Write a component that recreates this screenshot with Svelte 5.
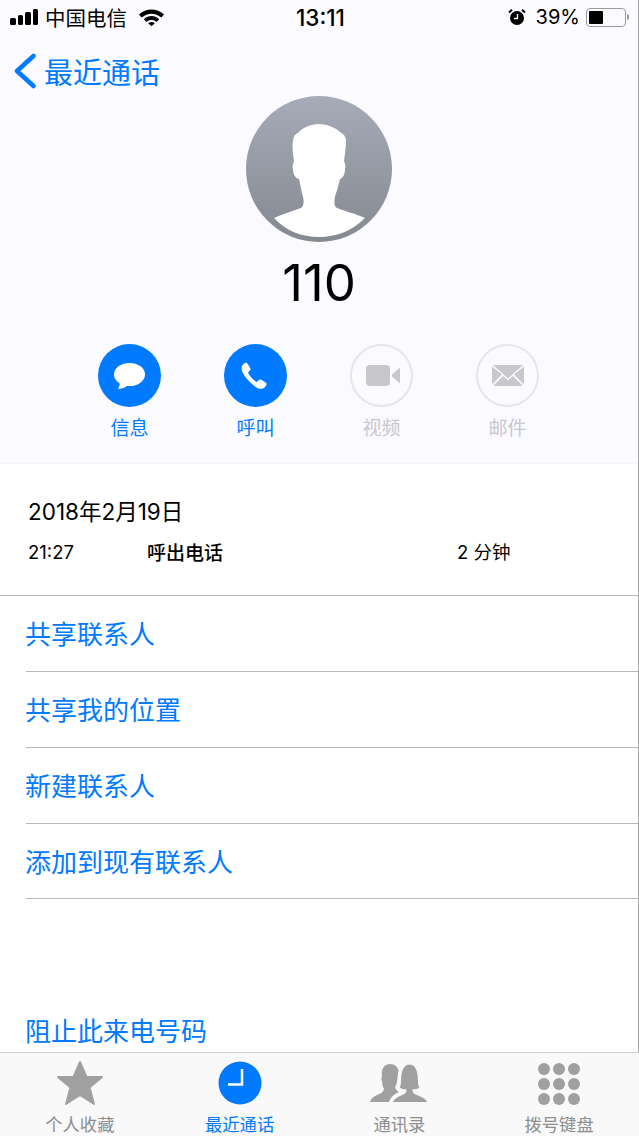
<script>
  const actions = [
    { label: '信息', icon: 'message', on: true },
    { label: '呼叫', icon: 'phone', on: true },
    { label: '视频', icon: 'video', on: false },
    { label: '邮件', icon: 'mail', on: false }
  ];
  const options = ['共享联系人', '共享我的位置', '新建联系人', '添加到现有联系人'];
  const tabs = [
    { label: '个人收藏', icon: 'star' },
    { label: '最近通话', icon: 'clock', active: true },
    { label: '通讯录', icon: 'people' },
    { label: '拨号键盘', icon: 'keypad' }
  ];
  const keys = [0, 1, 2, 3, 4, 5, 6, 7, 8];
</script>

<div class="page">
  <div class="content">
    <header class="top">
      <div class="status">
        <div class="status-left">
          <div class="signal"><i></i><i></i><i></i><i></i></div>
          <span class="carrier">中国电信</span>
          <svg class="wifi" width="25" height="18" viewBox="0 0 26 18">
            <path d="M0 6.500C7.500-.5 18.500-.5 26 6.500l-2.800 3C17 4.200 9 4.200 2.800 9.500z" fill="#000" />
            <path d="M5 11.300C10 6.800 16 6.800 21 11.300l-2.800 2.900C15 11.500 11 11.500 7.800 14.200z" fill="#000" />
            <path d="M9.500 15.500c2-1.600 5-1.600 7 0L13 18.500z" fill="#000" />
          </svg>
        </div>
        <span class="time">13:11</span>
        <div class="status-right">
          <svg class="alarm" width="18" height="18" viewBox="0 0 18 18">
            <circle cx="9" cy="10" r="7" fill="#000" />
            <path d="M1 4.500 4 1.800M17 4.500 14 1.800" stroke="#000" stroke-width="2" />
            <path d="M9.500 6v4.500H6" stroke="#fff" stroke-width="1.300" fill="none" />
          </svg>
          <span class="percent">39%</span>
          <div class="battery"><div class="level"></div></div>
          <div class="nub"></div>
        </div>
      </div>

      <div class="back">
        <svg width="24" height="36" viewBox="0 0 24 36">
          <path d="M20.500 3 4 18l16.500 15" fill="none" stroke="#007aff" stroke-width="4.500" stroke-linecap="round" stroke-linejoin="round" />
        </svg>
        <span>最近通话</span>
      </div>

      <div class="avatar">
        <svg width="146" height="146" viewBox="0 0 146 146">
          <path fill="#fff" d="M28 122C36 118 47 115 55 112C58 110 58 106 57 101C56 97 55 92 53 83C49 82 47 78 47 73C46 70 47 68 48 65C47 58 46 50 47 45C47 41 49 38 53 36C56 32 65 28 73 28C81 28 90 32 94 36C98 38 100 41 100 45C100 50 99 58 98 65C99 68 100 70 99 73C99 78 97 82 94 83C92 92 90 97 89 101C88 106 88 110 91 112C99 115 110 118 119 122C106 135 90 141 73 141C56 141 40 135 28 122Z" />
        </svg>
      </div>

      <h1 class="number">110</h1>

      <div class="actions">
        {#each actions as a}
          <div class="action" class:on={a.on}>
            <div class="circle">
              {#if a.icon === 'message'}
                <svg width="32" height="28" viewBox="0 0 32 28">
                  <ellipse cx="16.500" cy="12.500" rx="15.500" ry="11.500" fill="#fff" />
                  <path d="M7 20c0 3-1 5-2 7 3 0 7-1 9-3z" fill="#fff" />
                </svg>
              {:else if a.icon === 'phone'}
                <svg width="28" height="28" viewBox="0 0 28 28">
                  <path fill="#fff" d="M2 2.500C3 1.300 4.500.3 5.500.8c1 .5 3.700 5 4 6.200.3 1-1.300 2.300-2.300 3.300-.4.700 1 3 3.300 5.500s4.800 4.500 5.600 4c1-.8 2.200-2.400 3.200-2.200 1.400.3 5.600 3 6.200 4 .4 1-.5 2.300-1.500 3.300-1.400 1.400-3.500 2.300-5.500 1.800C13 25.500 2 14 .8 8.300.4 6 .7 4 2 2.500z" />
                </svg>
              {:else if a.icon === 'video'}
                <svg class="video" width="34" height="22" viewBox="0 0 34 22">
                  <rect x="0" y="0" width="24" height="21" rx="4" fill="#c7c7cc" />
                  <path d="M26 9.500 34 2.500v16l-8-7z" fill="#c7c7cc" />
                </svg>
              {:else}
                <svg class="mail" width="32" height="21" viewBox="0 0 32 21">
                  <path d="M1 0h30L16 13.500z" fill="#c7c7cc" />
                  <path d="M0 1.500v18L10 9.500zM32 1.500v18L22 9.500z" fill="#c7c7cc" />
                  <path d="M1 21 11 11l5 4.500 5-4.500 10 10z" fill="#c7c7cc" />
                </svg>
              {/if}
            </div>
            <span>{a.label}</span>
          </div>
        {/each}
      </div>
    </header>

    <section class="call">
      <div class="date">2018年2月19日</div>
      <div class="call-row">
        <span class="call-time">21:27</span>
        <span class="call-type">呼出电话</span>
        <span class="call-len">2 分钟</span>
      </div>
    </section>

    <ul class="options">
      {#each options as opt}
        <li>{opt}</li>
      {/each}
    </ul>

    <div class="block">阻止此来电号码</div>
  </div>

  <nav class="tabs">
    {#each tabs as t}
      <div class="tab" class:active={t.active}>
        <div class="tab-icon">
          {#if t.icon === 'star'}
            <svg width="48" height="46" viewBox="0 0 48 46">
              <path fill="#a0a0a0" stroke="#a0a0a0" stroke-width="2" stroke-linejoin="round" d="M24 2l6.500 15H46L33.500 27.500 38 44 24 35 10 44l4.500-16.500L2 17h15.500z" />
            </svg>
          {:else if t.icon === 'clock'}
            <svg width="44" height="44" viewBox="0 0 44 44">
              <circle cx="22" cy="22" r="21.500" fill="#007aff" />
              <path d="M24 8v15.500H10" fill="none" stroke="#fff" stroke-width="2.500" />
            </svg>
          {:else if t.icon === 'people'}
            <svg width="58" height="40" viewBox="0 0 58 40">
              <path fill="#a0a0a0" d="M0 39C1 35 5 33 9 31C12 30 13 29 14 26C13 24 12 21 12 18C11 17 11 15 12 14C11 6 14 1 20 1C25 1 28 4 28.500 8C27 14 28 20 25 24C26 27 27 28 29 29C25 31 21 33 19 39Z" />
              <path fill="#a0a0a0" stroke="#f9f9f9" stroke-width="1.200" d="M22 39.500C23 35 28 33 33 31C35 30 36 29 36 27C33 27 30 26 29 25C31 22 30 17 31 11C32 5 35 1 39.500 1C44 1 47 5 48 11C49 17 48 22 50 25C49 26 46 27 43 27C43 29 44 30 46 31C51 33 57 35 58 39.500Z" />
            </svg>
          {:else}
            <div class="keypad">
              {#each keys as k}
                <i></i>
              {/each}
            </div>
          {/if}
        </div>
        <span>{t.label}</span>
      </div>
    {/each}
  </nav>
</div>

<style>
  :global(body) {
    margin: 0;
    background: #fff;
  }

  .page {
    width: 639px;
    height: 1136px;
    display: flex;
    flex-direction: column;
    overflow: hidden;
    font-family: "Noto Sans CJK SC", sans-serif;
    color: #000;
    background: #fff;
  }

  .content {
    height: 1052px;
    flex-shrink: 0;
    overflow: hidden;
    border-right: 1px solid #a8a8a8;
    box-sizing: border-box;
  }

  .top {
    height: 464px;
    background: #fbfbff;
    display: flex;
    flex-direction: column;
    align-items: center;
    border-bottom: 1px solid #f5f5f7;
    box-sizing: border-box;
  }

  .status {
    width: 100%;
    height: 36px;
    display: flex;
    align-items: center;
    justify-content: space-between;
    padding: 0 9px 2px 10px;
    box-sizing: border-box;
    position: relative;
  }

  .status-left {
    display: flex;
    align-items: center;
    gap: 7px;
  }

  .signal {
    display: flex;
    align-items: flex-end;
    gap: 2px;
    height: 16px;
  }

  .signal i {
    display: block;
    width: 5.500px;
    background: #000;
    border-radius: 1.500px;
  }

  .signal i:nth-child(1) { height: 7px; }
  .signal i:nth-child(2) { height: 10px; }
  .signal i:nth-child(3) { height: 13px; }
  .signal i:nth-child(4) { height: 16px; }

  .carrier {
    font-size: 20.500px;
    line-height: 24px;
    margin-right: 5px;
  }

  .time {
    position: absolute;
    left: 296px;
    font-family: Inter, sans-serif;
    font-size: 22.500px;
    font-weight: 500;
  }

  .status-right {
    display: flex;
    align-items: center;
  }

  .alarm {
    margin-right: 10px;
  }

  .percent {
    font-family: Inter, sans-serif;
    font-size: 20px;
    margin-right: 6px;
  }

  .battery {
    width: 40px;
    height: 19px;
    box-sizing: border-box;
    border: 1px solid #9a9a9a;
    border-radius: 4px;
    padding: 2px;
  }

  .level {
    width: 14px;
    height: 100%;
    background: #000;
    border-radius: 1px;
  }

  .nub {
    width: 2px;
    height: 6px;
    background: #9a9a9a;
    border-radius: 0 2px 2px 0;
    margin-left: 1px;
  }

  .back {
    align-self: flex-start;
    display: flex;
    align-items: center;
    gap: 7px;
    height: 60px;
    box-sizing: border-box;
    padding: 9px 0 0 13px;
    color: #007aff;
    font-size: 29px;
    line-height: 36px;
  }

  .avatar {
    width: 146px;
    height: 146px;
    flex-shrink: 0;
    border-radius: 50%;
    background: linear-gradient(#a6abb8, #858992);
    overflow: hidden;
  }

  .avatar svg {
    display: block;
  }

  .number {
    margin: 10px 0 0;
    font-family: Inter, sans-serif;
    font-weight: 400;
    font-size: 51px;
    line-height: 62px;
  }

  .actions {
    display: grid;
    grid-template-columns: repeat(4, 126px);
    margin: 30px 2px 0 0;
  }

  .action {
    display: flex;
    flex-direction: column;
    align-items: center;
    color: #c7c7cc;
    font-size: 19px;
    line-height: 26px;
    gap: 7px;
  }

  .action span {
    margin-left: 1px;
  }

  .action.on {
    color: #007aff;
  }

  .circle {
    width: 63px;
    height: 63px;
    box-sizing: border-box;
    border-radius: 50%;
    border: 2px solid #e6e6ea;
    display: flex;
    align-items: center;
    justify-content: center;
  }

  .action.on .circle {
    background: #007aff;
    border: none;
  }

  .video {
    margin-left: 3px;
  }

  .mail {
    margin-left: 2px;
  }

  .call {
    height: 131px;
    box-sizing: border-box;
    padding: 33px 28px 0;
  }

  .date {
    font-family: Inter, "Noto Sans CJK SC", sans-serif;
    font-size: 22.500px;
    line-height: 30px;
  }

  .call-row {
    display: grid;
    grid-template-columns: 119px 310px 1fr;
    font-size: 19px;
    line-height: 26px;
    margin-top: 12px;
  }

  .call-time, .call-len {
    font-family: Inter, "Noto Sans CJK SC", sans-serif;
    font-size: 18.500px;
  }

  .call-type {
    font-weight: 500;
  }

  .options {
    list-style: none;
    margin: 0;
    padding: 0;
    border-top: 1px solid #b8b8bc;
  }

  .options li {
    height: 76px;
    box-sizing: border-box;
    margin-left: 26px;
    border-bottom: 1px solid #b8b8bc;
    color: #007aff;
    font-size: 26px;
    line-height: 73px;
    text-indent: -1px;
  }

  .options li:last-child {
    height: 75px;
  }

  .block {
    margin: 113px 0 0 26px;
    color: #007aff;
    font-size: 26px;
    line-height: 36px;
    text-indent: -1px;
  }

  .tabs {
    flex: 1;
    display: grid;
    grid-template-columns: repeat(4, 1fr);
    background: #f9f9f9;
    border-top: 1px solid #ccc;
    box-sizing: border-box;
  }

  .tab {
    display: flex;
    flex-direction: column;
    align-items: center;
    color: #8e8e8e;
    font-size: 17.300px;
    line-height: 22px;
  }

  .tab.active {
    color: #007aff;
  }

  .tab-icon {
    height: 60px;
    display: flex;
    align-items: center;
    justify-content: center;
  }

  .keypad {
    display: grid;
    grid-template-columns: repeat(3, 12px);
    gap: 3px;
    margin-top: 2px;
  }

  .keypad i {
    display: block;
    height: 12px;
    background: #a0a0a0;
    border-radius: 50%;
  }
</style>
